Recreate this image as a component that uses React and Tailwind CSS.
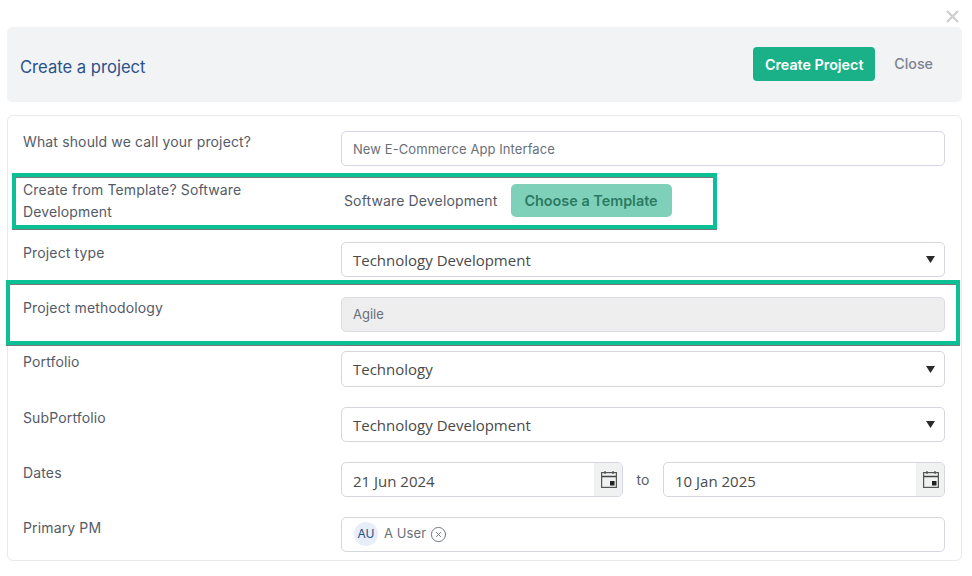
import { CircleX } from "lucide-react";

const inter = "font-['Inter',sans-serif]";
const fieldFont = "font-['Open_Sans',sans-serif]";

function Label({ children, className = "" }) {
  return <div className={`w-[300px] shrink-0 text-[14px] leading-[22px] text-[#555b66] tracking-[0.14px] ${className}`}>{children}</div>;
}

function SelectBox({ value, tall }) {
  return (
    <div className={`flex flex-1 items-center justify-between rounded-[5px] border border-[#d6d6de] pl-[11px] pr-[9px] text-[15px] text-[#4a4a4a] ${tall ? "h-[36px]" : "h-[35px]"} ${fieldFont}`}>
      <span className={tall ? "pt-[1px]" : "pt-[2px]"}>{value}</span>
      <svg width="9" height="7" viewBox="0 0 9 7"><path d="M0 0h9L4.5 7z" fill="#2b2b2b" /></svg>
    </div>
  );
}

function CalendarIcon() {
  return (
    <svg width="16" height="17" viewBox="0 0 16 17" fill="none">
      <path d="M4 0v3M12 0v3" stroke="#555" strokeWidth="1.3" />
      <rect x="0.6" y="1.6" width="14.8" height="14.8" stroke="#555" strokeWidth="1.2" />
      <path d="M1 5.5h14" stroke="#444" strokeWidth="1.5" />
      <rect x="9" y="10" width="4.5" height="4.5" fill="#222" />
    </svg>
  );
}

function DateBox({ value }) {
  return (
    <div className={`flex h-[35px] flex-1 items-stretch overflow-hidden rounded-[5px] border border-[#d6d6de] text-[15px] text-[#4a4a4a] ${fieldFont}`}>
      <span className="flex flex-1 items-center pl-[11px] pt-[3px]">{value}</span>
      <span className="flex w-[28px] items-center justify-center bg-[#f0f1f1] pl-[1px]"><CalendarIcon /></span>
    </div>
  );
}

export default function App() {
  return (
    <div className={`relative h-[576px] w-[972px] overflow-hidden bg-white px-[7px] pt-[27px] ${inter}`}>
      {/* modal close */}
      <svg className="absolute left-[946px] top-[10px]" width="13" height="13" viewBox="0 0 13 13">
        <path d="M1 1l11 11M12 1L1 12" stroke="#cfcfcf" strokeWidth="2.4" />
      </svg>

      <div className="flex h-[75px] w-[955px] items-center justify-between rounded-[5px] bg-[#f2f3f5] pl-[13px] pr-[29px]">
        <h1 className="pt-[6px] text-[16.6px] font-normal text-[#2a5288]">Create a project</h1>
        <div className="flex items-center gap-[19px] pb-[2px]">
          <button className="h-[34px] w-[122px] rounded-[4px] bg-[#1ab188] pt-[2px] text-[14.3px] font-semibold text-white">Create Project</button>
          <button className="text-[14.3px] font-medium text-[#7b8290]">Close</button>
        </div>
      </div>

      <div className="mt-[13px] h-[446px] w-[955px] rounded-[6px] border border-[#e8e9ec] pl-[15px] pr-[16px] pt-[15px]">
        <div className="flex">
          <Label>What should we call your project?</Label>
          <div className="ml-[18px] flex h-[35px] flex-1 items-center rounded-[5px] border border-[#d6d6e6] pl-[11px] pt-[2px] text-[13px] tracking-[0.08px] text-[#6a6f78]">New E-Commerce App Interface</div>
        </div>

        <div className="mt-[13px] flex items-center">
          <Label>Create from Template? Software Development</Label>
          <div className="ml-[21px] flex items-center gap-[13px] pb-[2px]">
            <span className="text-[14px] tracking-[0.14px] text-[#555b66]">Software Development</span>
            <button className="h-[33px] w-[161px] rounded-[5px] bg-[#7ed1b8] pt-[2px] text-[14.4px] font-semibold text-[#2b7a63]">Choose a Template</button>
          </div>
        </div>

        <div className="mt-[19px] flex">
          <Label>Project type</Label>
          <div className="ml-[18px] flex flex-1"><SelectBox value="Technology Development" /></div>
        </div>

        <div className="mt-[20px] flex">
          <Label>Project methodology</Label>
          <div className="ml-[18px] flex h-[35px] flex-1 items-center rounded-[5px] border border-[#dcdce2] bg-[#eeeeee] pl-[11px] text-[13px] text-[#6a6f78]">Agile</div>
        </div>

        <div className="mt-[19px] flex">
          <Label>Portfolio</Label>
          <div className="ml-[18px] flex flex-1"><SelectBox value="Technology" tall /></div>
        </div>

        <div className="mt-[20px] flex">
          <Label>SubPortfolio</Label>
          <div className="ml-[18px] flex flex-1"><SelectBox value="Technology Development" /></div>
        </div>

        <div className="mt-[20px] flex">
          <Label>Dates</Label>
          <div className="ml-[18px] flex flex-1 items-center">
            <DateBox value="21 Jun 2024" />
            <span className="w-[40px] text-center text-[14px] text-[#555b66]">to</span>
            <DateBox value="10 Jan 2025" />
          </div>
        </div>

        <div className="mt-[20px] flex">
          <Label>Primary PM</Label>
          <div className="ml-[18px] flex h-[35px] flex-1 items-center rounded-[5px] border border-[#d6d6de] pb-[1px] pl-[12px]">
            <span className="flex h-[24px] w-[24px] items-center justify-center rounded-full bg-[#e8eef7] text-[12px] text-[#234e86]">AU</span>
            <span className="ml-[6px] text-[13px] tracking-[0.1px] text-[#6a6f78]">A User</span>
            <CircleX className="ml-[4px] text-[#666c76]" size={17} strokeWidth={1.3} />
          </div>
        </div>
      </div>

      {/* annotation boxes drawn over the form */}
      <div className="pointer-events-none absolute left-[12px] top-[173px] h-[56px] w-[705px] border-[4px] border-[#0cc096] shadow-[0_1px_0_#777,inset_0_1px_0_#777]" />
      <div className="pointer-events-none absolute left-[6px] top-[280px] h-[65px] w-[954px] border-[4px] border-[#0cc096] shadow-[0_1px_0_#777,inset_0_1px_0_#777]" />
    </div>
  );
}
